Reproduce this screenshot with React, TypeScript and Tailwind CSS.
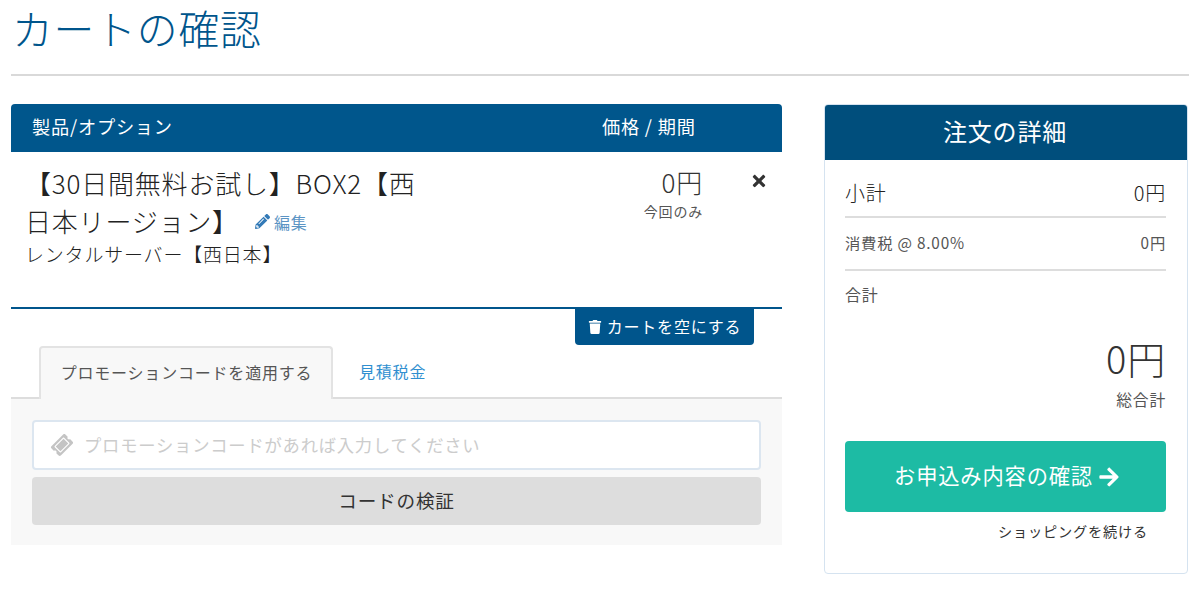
import { FaArrowRight, FaPencilAlt, FaTicketAlt, FaTimes, FaTrash } from "react-icons/fa";

const jp = "font-['Noto_Sans_CJK_JP','Noto_Sans',sans-serif]";

export default function App() {
  return (
    <div className={`${jp} h-[604px] w-[1200px] overflow-hidden bg-white px-[11px] tracking-[0.05em] text-[#333]`}>
      <h1 className="h-[76px] border-b-2 border-[#d9d9d9] pl-[1px] pt-[3px] text-[40.8px] leading-[50px] font-light text-[#00558c]">
        カートの確認
      </h1>
      <div className="mt-[28px] flex items-start justify-between pr-px">
        <div className="w-[771px]">
          <div className="flex h-[48px] items-center rounded-t-[4px] bg-[#00568c] pb-[4px] pl-[21px] text-[18.2px] leading-[24px] text-white">
            <div className="w-[570px]">製品/オプション</div>
            <div>価格 / 期間</div>
          </div>
          <div className="flex h-[157px] border-b-2 border-[#00558c] pt-[12px]">
            <div className="w-[560px] pl-[14px]">
              <div className="w-[402px] text-[26px] leading-[38px] font-light text-[#222]">
                【30日間無料お試し】BOX2【西日本リージョン】
                <span className="ml-[16px] inline-flex -translate-y-[3px] items-center gap-[4px] text-[16px] font-normal text-[#5b94c4]">
                  <FaPencilAlt className="text-[15px] text-[#337ab7]" />
                  編集
                </span>
              </div>
              <div className="-mt-[2px] text-[19px] leading-[24px] font-light text-[#222]">レンタルサーバー【西日本】</div>
            </div>
            <div className="w-[132px] text-right">
              <div className="text-[26px] leading-[36px] font-light">0円</div>
              <div className="mt-[2px] text-[14px] leading-[18px] text-[#555]">今回のみ</div>
            </div>
            <FaTimes className="ml-[47px] mt-[8px] text-[18px] text-[#333]" />
          </div>
          <div className="flex justify-end pr-[28px]">
            <button className="flex h-[36px] w-[179px] items-center justify-center gap-[5px] rounded-b-[4px] bg-[#00558c] pb-[2px] text-[16px] text-white">
              <FaTrash className="mt-[2px] text-[14px]" />
              カートを空にする
            </button>
          </div>
          <div className="flex h-[54px] items-end border-b-2 border-[#ddd] pl-[28px]">
            <div className="relative -mb-[2px] flex h-[53px] w-[294px] items-center justify-center rounded-t-[4px] border-2 border-b-0 border-[#e3e3e3] bg-[#f8f8f8] pb-[3px] pl-[1px] text-[16px] text-[#555]">
              プロモーションコードを適用する
            </div>
            <div className="flex h-[52px] items-center pl-[26px] text-[16px] text-[#2f8fd0]">見積税金</div>
          </div>
          <div className="h-[146px] bg-[#f8f8f8] px-[21px] pt-[21px]">
            <div className="flex h-[50px] items-center gap-[12px] rounded-[4px] border-2 border-[#dce6f0] bg-white pl-[18px] text-[17.3px] text-[#ccc]">
              <FaTicketAlt className="-rotate-45 text-[20px] text-[#c4c4c4]" />
              プロモーションコードがあれば入力してください
            </div>
            <button className="mt-[7px] h-[48px] w-full rounded-[4px] bg-[#ddd] pb-[3px] text-[18.6px] text-[#333]">
              コードの検証
            </button>
          </div>
        </div>
        <div className="h-[470px] w-[364px] overflow-hidden rounded-[4px] border border-[#d5e3f0]">
          <div className="-mx-px -mt-px flex h-[56px] items-center justify-center bg-[#004e7c] pb-[3px] pr-[2px] text-[24px] text-white">
            注文の詳細
          </div>
          <div className="pl-[20px] pr-[21px]">
            <div className="flex h-[58px] items-center justify-between border-b-2 border-[#ddd] pt-[10px]">
              <span className="text-[20px] font-light text-[#222]">小計</span>
              <span className="text-[20px] font-light text-[#222]">0円</span>
            </div>
            <div className="flex h-[53px] items-center justify-between border-b-2 border-[#ddd] pb-[3px] text-[15.3px] text-[#555]">
              <span>消費税 @ 8.00%</span>
              <span>0円</span>
            </div>
            <div className="pt-[12px] text-[16px] leading-[22px] text-[#555]">合計</div>
            <div className="mt-[28px] text-right text-[38px] leading-[50px] font-light">0円</div>
            <div className="mt-[6px] text-right text-[15.8px] leading-[22px] text-[#555]">総合計</div>
            <button className="mt-[30px] flex h-[71px] w-full items-center justify-center gap-[5px] rounded-[4px] bg-[#1dbba4] pb-[3px] pl-[3px] text-[21.3px] text-white">
              お申込み内容の確認
              <FaArrowRight className="mt-[3px] text-[22px]" />
            </button>
            <div className="mt-[8px] pr-[18px] text-right text-[14.2px] leading-[22px]">ショッピングを続ける</div>
          </div>
        </div>
      </div>
    </div>
  );
}
